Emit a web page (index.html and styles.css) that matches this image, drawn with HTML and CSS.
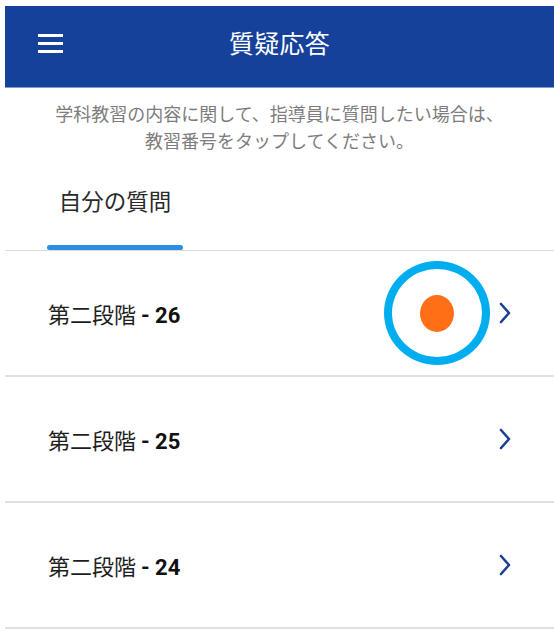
FILE: index.html
```html
<!DOCTYPE html>
<html lang="ja">
<head>
<meta charset="utf-8">
<title>質疑応答</title>
<link rel="stylesheet" href="styles.css">
</head>
<body>
<div class="app">
  <header class="appbar">
    <button class="menu-btn" aria-label="メニュー">
      <span class="bar"></span><span class="bar"></span><span class="bar"></span>
    </button>
    <h1 class="title">質疑応答</h1>
    <span class="spacer"></span>
  </header>

  <p class="intro">学科教習の内容に関して、指導員に質問したい場合は、<br>教習番号をタップしてください。</p>

  <nav class="tabs">
    <div class="tab active">
      <span class="tab-label">自分の質問</span>
      <span class="tab-indicator"></span>
    </div>
  </nav>

  <ul class="list">
    <li class="row">
      <span class="row-label">第二段階 <b>- 26</b></span>
      <span class="badge-wrap">
        <span class="badge"></span>
        <span class="highlight-ring"></span>
      </span>
      <svg class="chevron" viewBox="0 0 14 22" width="14" height="22"><path d="M3 2 L11 11 L3 20" fill="none" stroke="#1c3f92" stroke-width="2.6" stroke-linecap="round" stroke-linejoin="round"/></svg>
    </li>
    <li class="row">
      <span class="row-label">第二段階 <b>- 25</b></span>
      <svg class="chevron" viewBox="0 0 14 22" width="14" height="22"><path d="M3 2 L11 11 L3 20" fill="none" stroke="#1c3f92" stroke-width="2.6" stroke-linecap="round" stroke-linejoin="round"/></svg>
    </li>
    <li class="row">
      <span class="row-label">第二段階 <b>- 24</b></span>
      <svg class="chevron" viewBox="0 0 14 22" width="14" height="22"><path d="M3 2 L11 11 L3 20" fill="none" stroke="#1c3f92" stroke-width="2.6" stroke-linecap="round" stroke-linejoin="round"/></svg>
    </li>
  </ul>
</div>
</body>
</html>
```

FILE: styles.css
```css
* { box-sizing: border-box; }

html, body {
  margin: 0;
  padding: 0;
  background: #ffffff;
}

body {
  padding: 6px 0 0 5px;
  font-family: "Noto Sans CJK JP", "Noto Sans", Roboto, sans-serif;
  color: #222;
}

.app {
  width: 549px;
}

.appbar {
  height: 82px;
  background: #16419b;
  border-bottom: 1px solid #7f9bd0;
  display: flex;
  align-items: center;
  padding: 0 0 6px 0;
}

.menu-btn {
  width: 90px;
  height: 40px;
  background: none;
  border: 0;
  padding: 0 0 0 33px;
  display: flex;
  flex-direction: column;
  justify-content: center;
  gap: 5px;
  cursor: pointer;
}

.menu-btn .bar {
  display: block;
  width: 25px;
  height: 3px;
  background: #ffffff;
}

.title {
  flex: 1;
  margin: 0 0 4px 0;
  text-align: center;
  color: #ffffff;
  font-size: 25px;
  font-weight: 400;
  letter-spacing: 0.3px;
  line-height: 32px;
}

.spacer {
  width: 90px;
}

.intro {
  margin: 0;
  padding: 12px 0 0 0;
  text-align: center;
  color: #7d7d7d;
  font-size: 18px;
  line-height: 27px;
}

.tabs {
  margin-top: 31px;
  border-bottom: 1px solid #dadada;
  display: flex;
}

.tab {
  margin-left: 42px;
  width: 136px;
  display: flex;
  flex-direction: column;
  align-items: center;
}

.tab-label {
  font-size: 22.5px;
  line-height: 30px;
  color: #2a2a2a;
}

.tab-indicator {
  margin-top: 30px;
  width: 136px;
  height: 5px;
  border-radius: 3px;
  background: #2b8ee0;
}

.list {
  list-style: none;
  margin: 0;
  padding: 0;
}

.row {
  height: 126px;
  border-bottom: 2px solid #e0e0e0;
  display: flex;
  align-items: center;
  padding: 0 42px 0 43px;
}

.row-label {
  flex: 1;
  font-size: 22px;
  color: #1e1e1e;
}

.row-label b {
  font-family: Roboto, "Noto Sans", sans-serif;
  font-weight: 700;
  color: #111;
}

.badge-wrap {
  position: relative;
  width: 34px;
  height: 37px;
  margin-right: 44px;
}

.badge {
  display: block;
  width: 34px;
  height: 37px;
  border-radius: 50%;
  background: #ff6f16;
}

.highlight-ring {
  position: absolute;
  left: 50%;
  top: 50%;
  width: 106px;
  height: 104px;
  transform: translate(-50%, -50%);
  border: 8px solid #00aeef;
  border-radius: 50%;
}

.chevron {
  display: block;
}
```
